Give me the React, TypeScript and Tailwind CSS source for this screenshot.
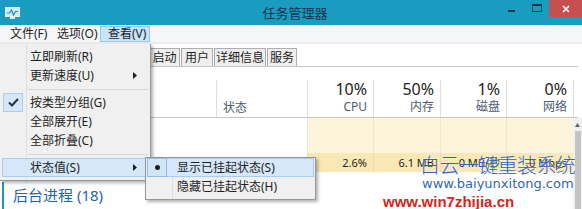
import React from 'react';

type Metric = { pct: string; label: string; w: string; val: string };

const metrics: Metric[] = [
  { pct: '10%', label: 'CPU', w: 'w-[66px]', val: '2.6%' },
  { pct: '50%', label: '内存', w: 'w-[67px]', val: '6.1 MB' },
  { pct: '1%', label: '磁盘', w: 'w-[66px]', val: '0 MB/秒' },
  { pct: '0%', label: '网络', w: 'w-[67px]', val: '0 Mbps' },
];

// tabs to the left of 启动 sit behind the open menu
const tabs = [
  { label: '启动', w: 'w-[31px]' },
  { label: '用户', w: 'w-[32px]' },
  { label: '详细信息', w: 'w-[52px]' },
  { label: '服务', w: 'w-[30px]' },
];

const AppIcon = () => (
  <svg width="15" height="12" viewBox="0 0 15 12">
    <rect x="0.5" y="0.5" width="14" height="9" fill="#cfe9f5" stroke="#eef8fc" />
    <polyline points="2,6 4.5,6 6.5,3 8.5,8 10.5,4.5 13,4.5" fill="none" stroke="#2a8db5" strokeWidth="1.2" />
    <rect x="5" y="10" width="5" height="2" fill="#d6eef7" />
  </svg>
);

const Arrow = () => (
  <svg width="4" height="7" viewBox="0 0 4 7">
    <path d="M0 0 L4 3.5 L0 7 Z" fill="#1e1e1e" />
  </svg>
);

const Check = () => (
  <svg width="11" height="9" viewBox="0 0 11 9">
    <path d="M1 4.5 L4 7.5 L10 1" fill="none" stroke="#1f3550" strokeWidth="2" />
  </svg>
);

interface MenuItemProps {
  label: string;
  checked?: boolean;
  arrow?: boolean;
  active?: boolean;
}

const MenuItem: React.FC<MenuItemProps> = ({ label, checked, arrow, active }) => (
  <div className="relative h-[19px] px-[2px]">
    <div
      className={`flex h-full items-center border ${
        active ? 'border-[#a8cdee] bg-[#d5e7f8]' : 'border-transparent'
      }`}
    >
      <div className="flex h-full w-[20px] items-center justify-center">
        {checked && (
          <div className="flex h-[19px] w-[20px] items-center justify-center border border-[#a8cdee] bg-[#d5e7f8]">
            <Check />
          </div>
        )}
      </div>
      <span className="ml-[7px] text-[12px] leading-[17px] text-[#1e1e1e]">{label}</span>
      {arrow && (
        <span className="ml-auto mr-[10px] flex items-center">
          <Arrow />
        </span>
      )}
    </div>
  </div>
);

const Separator = () => (
  <div className="flex h-[8px] items-center pl-[28px] pr-[2px]">
    <div className="h-px w-full bg-[#d7d7d7]" />
  </div>
);

export default function App() {
  return (
    <div className="relative h-[209px] w-[582px] overflow-hidden bg-white font-['Noto_Sans','Noto_Sans_CJK_SC',sans-serif] text-[#1e1e1e]">
      {/* Title bar */}
      <div className="grid h-[25px] grid-cols-[1fr_auto_1fr] bg-[#1a9cc1]">
        <div className="flex items-start pl-[5px] pt-[7px]">
          <AppIcon />
        </div>
        <div className="pl-[8px] pt-[4px] text-[13px] leading-[18px] text-[#12344a]">任务管理器</div>
        <div className="flex items-start justify-end">
          <div className="flex h-[17px] w-[25px] items-start justify-center pt-[10px]">
            <div className="h-[2px] w-[7px] bg-[#12344a]" />
          </div>
          <div className="flex h-[17px] w-[25px] items-start justify-center pt-[4px]">
            <div className="h-[8px] w-[10px] border border-t-2 border-[#12344a]" />
          </div>
          <div className="flex h-[17px] w-[33px] items-center justify-center bg-[#c74f4f]">
            <svg width="8" height="8" viewBox="0 0 8 8">
              <path d="M1 1 L7 7 M7 1 L1 7" stroke="#fff" strokeWidth="1.6" />
            </svg>
          </div>
        </div>
      </div>

      {/* Menu bar */}
      <div className="flex h-[19px] items-center border-b-2 border-[#e9eaeb] bg-[#f5f6f7] pl-[2px] text-[12px]">
        <div className="flex h-[16px] w-[49px] items-center pl-[8px]">文件(F)</div>
        <div className="flex h-[16px] w-[49px] items-center pl-[6px]">选项(O)</div>
        <div className="flex h-[16px] w-[50px] items-center border border-[#95c8f0] bg-[#cae3f7] pl-[7px]">查看(V)</div>
      </div>

      {/* Tabs */}
      <div className="flex h-[22px] items-end gap-px pl-[149px]">
        {tabs.map((t) => (
          <div
            key={t.label}
            className={`flex h-[18px] items-center justify-center border border-b-0 border-[#adadad] bg-[#eeeeee] text-[12px] leading-[16px] ${t.w}`}
          >
            {t.label}
          </div>
        ))}
      </div>

      {/* Column header */}
      <div className="mr-[4px] flex h-[52px] border-y border-[#c6c6c6]">
        <div className="w-[216px]" />
        <div className="mt-[13px] flex w-[91px] flex-col justify-end border-l border-[#dedede] pb-[1px] pl-[6px] text-[12px] leading-[16px] text-[#4c5b70]">
          状态
        </div>
        {metrics.map((m) => (
          <div
            key={m.label}
            className={`mt-[13px] flex flex-col items-end border-l border-[#dedede] pr-[6px] ${m.w}`}
          >
            <span className="text-[16px] leading-[18px] text-[#1e1e1e]">{m.pct}</span>
            <span className="mt-[1px] text-[12px] leading-[16px] text-[#4c5b70]">{m.label}</span>
          </div>
        ))}
        <div className="mt-[13px] flex-1 border-l border-[#dedede]" />
      </div>

      {/* Body */}
      <div className="flex">
        <div className="w-[573px]">
          {['h-[18px]', 'h-[17px]'].map((h, i) => (
            <div key={i} className={`flex ${h}`}>
              <div className="w-[307px]" />
              {metrics.map((m) => (
                <div key={m.label} className={`border-l border-[#efe6cc] bg-[#fdf4dc] ${m.w}`} />
              ))}
            </div>
          ))}
          <div className="flex h-[19px]">
            <div className="w-[307px]" />
            {metrics.map((m) => (
              <div
                key={m.label}
                className={`flex items-center justify-end border-l border-[#eadcab] bg-[#f9e8b3] pr-[6px] text-[11px] leading-[14px] ${m.w}`}
              >
                {m.val}
              </div>
            ))}
          </div>
          <div className="pt-[10px]">
            <div className="ml-[2px] h-[27px] border-l-2 border-[#1a9cc1] pl-[9px] text-[15px] leading-[26px] text-[#1f64ae]">
              后台进程 (18)
            </div>
          </div>
        </div>
        <div className="flex h-[91px] w-[9px] flex-col items-center bg-[#f0f0f0]">
          <svg width="5" height="4" viewBox="0 0 5 4" className="mt-[5px]">
            <path d="M0 4 L2.5 0 L5 4 Z" fill="#606060" />
          </svg>
          <div className="mt-[4px] w-[6px] flex-1 bg-[#c4c4c4]" />
        </div>
      </div>

      {/* View menu */}
      <div className="absolute left-0 top-[44px] w-[151px] border-b border-r border-[#979797] bg-[#f0f0f0] pb-[3px] pt-[3px] shadow-[2px_2px_3px_rgba(0,0,0,0.3)]">
        <div className="absolute bottom-0 left-[26px] top-0 w-px bg-[#e0e0e0]" />
        <MenuItem label="立即刷新(R)" />
        <MenuItem label="更新速度(U)" arrow />
        <Separator />
        <MenuItem label="按类型分组(G)" checked />
        <MenuItem label="全部展开(E)" />
        <MenuItem label="全部折叠(C)" />
        <Separator />
        <MenuItem label="状态值(S)" arrow active />
      </div>

      {/* Status submenu */}
      <div className="absolute left-[145px] top-[157px] w-[171px] border border-[#979797] bg-[#f0f0f0] px-px pb-[3px] shadow-[2px_2px_3px_rgba(0,0,0,0.3)]">
        <div className="absolute bottom-0 left-[26px] top-0 w-px bg-[#e0e0e0]" />
        <div className="relative flex h-[19px] items-center border border-[#a8cdee] bg-[#d5e7f8]">
          <div className="-ml-px flex h-[19px] w-[20px] items-center justify-center border border-[#8fbde6] bg-[#d0e5f8]">
            <div className="h-[5px] w-[5px] rounded-full bg-[#1e1e1e]" />
          </div>
          <span className="ml-[10px] text-[12px] leading-[17px]">显示已挂起状态(S)</span>
        </div>
        <div className="relative flex h-[19px] items-center">
          <div className="w-[20px]" />
          <span className="ml-[10px] text-[12px] leading-[17px]">隐藏已挂起状态(H)</span>
        </div>
      </div>

      {/* Watermark */}
      <div className="absolute left-[420px] top-[153px] text-[20px] font-light leading-[26px] tracking-[-0.6px] text-[#2f62c2] [text-shadow:0_0_2px_#fff]">
        白云一键重装系统
      </div>
      <div className="absolute left-[422px] top-[176px] font-['DejaVu_Sans',sans-serif] text-[13px] leading-[15px] text-[#2f66b8] [text-shadow:0_0_2px_#fff]">
        www.baiyunxitong.com
      </div>
      <div className="absolute left-[383px] top-[193px] font-['Liberation_Sans',sans-serif] text-[15px] font-bold leading-[18px] text-[#d9241b]">
        www.win7zhijia.cn
      </div>
    </div>
  );
}
